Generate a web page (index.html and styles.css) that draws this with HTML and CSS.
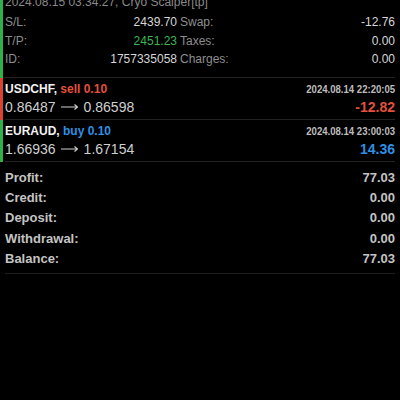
FILE: index.html
```html
<!DOCTYPE html>
<html lang="en">

<head>
    <meta charset="utf-8">
    <link rel="stylesheet" href="styles.css">
    <title>Trade</title>
</head>

<body>
    <div class="lista">
        <div class="ordem ordem-aberta">
            <div class="ordem-corpo">
                <p class="ordem-topo">2024.08.15 03:34:27, Cryo Scalper[tp]</p>
                <div class="info">
                    <div class="info-metade">
                        <div class="info-linha"><span>S/L:</span><span class="info-valor">2439.70</span></div>
                        <div class="info-linha"><span>T/P:</span><span class="info-valor verde">2451.23</span></div>
                        <div class="info-linha"><span>ID:</span><span class="info-valor">1757335058</span></div>
                    </div>
                    <div class="info-metade info-direita">
                        <div class="info-linha"><span>Swap:</span><span class="info-valor">-12.76</span></div>
                        <div class="info-linha"><span>Taxes:</span><span class="info-valor">0.00</span></div>
                        <div class="info-linha"><span>Charges:</span><span class="info-valor">0.00</span></div>
                    </div>
                </div>
            </div>
        </div>

        <div class="ordem ordem-venda">
            <div class="ordem-corpo">
                <div class="ordem-linha">
                    <span class="simbolo">USDCHF, <span class="vermelho">sell 0.10</span></span>
                    <span class="data">2024.08.14 22:20:05</span>
                </div>
                <div class="ordem-linha">
                    <span class="precos">0.86487<svg class="seta" width="18" height="8" viewBox="0 0 18 8"><path d="M0 4H16.5M13.5 1.5L16.5 4L13.5 6.5" /></svg>0.86598</span>
                    <span class="lucro vermelho">-12.82</span>
                </div>
            </div>
        </div>

        <div class="ordem ordem-compra">
            <div class="ordem-corpo">
                <div class="ordem-linha">
                    <span class="simbolo">EURAUD, <span class="azul">buy 0.10</span></span>
                    <span class="data">2024.08.14 23:00:03</span>
                </div>
                <div class="ordem-linha">
                    <span class="precos">1.66936<svg class="seta" width="18" height="8" viewBox="0 0 18 8"><path d="M0 4H16.5M13.5 1.5L16.5 4L13.5 6.5" /></svg>1.67154</span>
                    <span class="lucro azul">14.36</span>
                </div>
            </div>
        </div>

        <div class="resumo">
            <div class="resumo-linha"><span>Profit:</span><span>77.03</span></div>
            <div class="resumo-linha"><span>Credit:</span><span>0.00</span></div>
            <div class="resumo-linha"><span>Deposit:</span><span>0.00</span></div>
            <div class="resumo-linha"><span>Withdrawal:</span><span>0.00</span></div>
            <div class="resumo-linha"><span>Balance:</span><span>77.03</span></div>
        </div>
    </div>
</body>

</html>
```

FILE: styles.css
```css
* {
    box-sizing: border-box;
    margin: 0;
    padding: 0;
}

body {
    height: 100vh;
    width: 100vw;
    background: #000;
    font-family: "Liberation Sans", Arial, sans-serif;
    color: #d4d4d4;
    overflow: hidden;
}

.lista {
    margin-top: -6px;
}

.ordem {
    border-left: 3px solid #2fb14a;
    padding-left: 2px;
}

.ordem-venda {
    border-left-color: #d9432f;
}

.ordem-corpo {
    margin-right: 5px;
    border-bottom: 1px solid #222;
}

.ordem-aberta .ordem-corpo {
    padding-bottom: 8px;
}

.ordem-topo {
    font-size: 12px;
    line-height: 16px;
    color: #8a8a8a;
    margin-bottom: 3px;
}

.info {
    display: flex;
    font-size: 12px;
    line-height: 18.5px;
    color: #8e8e8e;
}

.info-metade {
    width: 172px;
}

.info-direita {
    flex: 1;
    margin-left: 3px;
}

.info-linha {
    display: flex;
    justify-content: space-between;
}

.info-valor {
    color: #d6d6d6;
}

.verde {
    color: #3db550;
}

.vermelho {
    color: #e2513d;
}

.azul {
    color: #2f8fe4;
}

.ordem-venda .ordem-corpo,
.ordem-compra .ordem-corpo {
    padding: 3px 0 2px;
}

.ordem-linha {
    display: flex;
    justify-content: space-between;
    align-items: center;
}

.ordem-linha:first-child {
    height: 16px;
}

.ordem-linha:last-child {
    height: 20px;
}

.simbolo {
    font-size: 12px;
    font-weight: bold;
    color: #f2f2f2;
}

.data {
    display: inline-block;
    font-size: 11px;
    font-weight: bold;
    color: #bdbdbd;
    transform: scaleX(0.87);
    transform-origin: right center;
}

.precos {
    display: flex;
    align-items: center;
    font-size: 14px;
    color: #cfcfcf;
}

.seta {
    margin: 1px 5px 0;
    fill: none;
    stroke: #cfcfcf;
    stroke-width: 1.1;
}

.lucro {
    font-size: 14px;
    font-weight: bold;
}

.resumo {
    margin: 0 5px;
    padding: 6px 0 3px;
    border-bottom: 1px solid #1e1e1e;
}

.resumo-linha {
    display: flex;
    justify-content: space-between;
    font-size: 13px;
    font-weight: bold;
    line-height: 20.4px;
    color: #c4c4c4;
}
```
